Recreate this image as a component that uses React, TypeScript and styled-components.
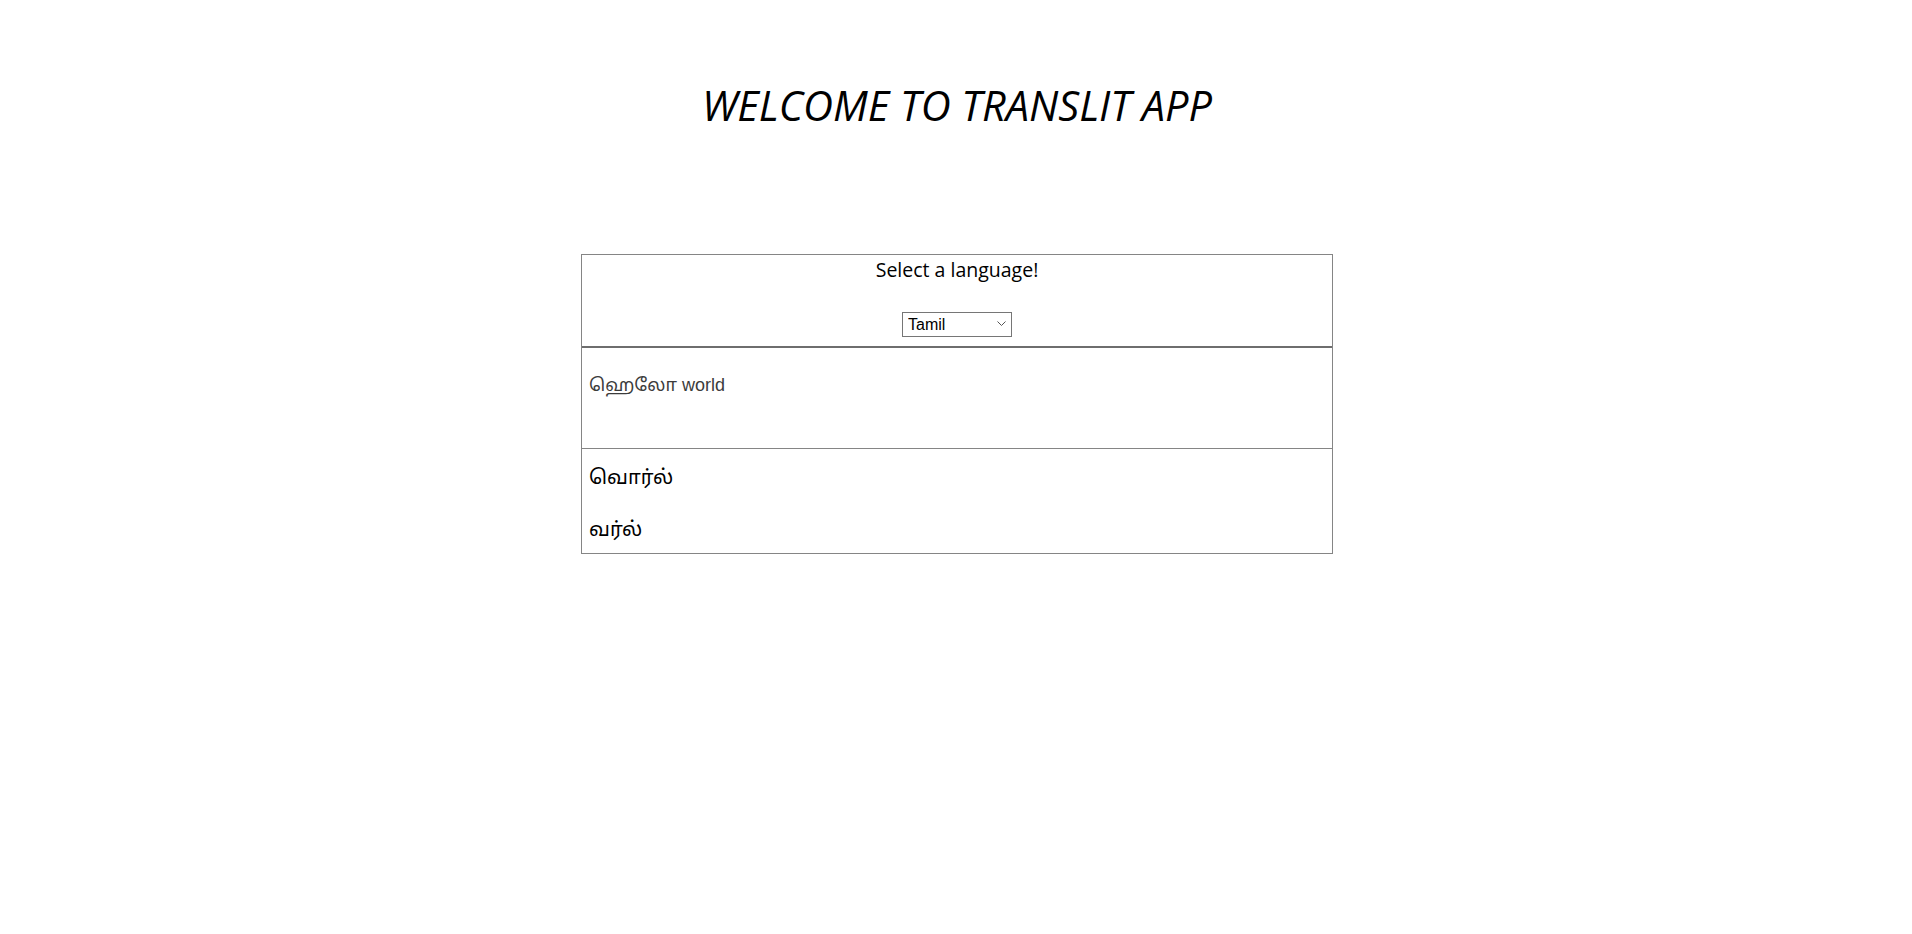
import React, { useEffect, useRef, useState } from "react";
import styled, { createGlobalStyle } from "styled-components";

const GlobalStyle = createGlobalStyle`
  html, body {
    margin: 0;
    padding: 0;
    background: #ffffff;
  }
  body {
    font-family: "Open Sans", "Noto Sans", sans-serif;
    color: #000;
  }
`;

const Page = styled.div`
  display: flex;
  flex-direction: column;
  align-items: center;
  padding: 77px 0 0 2px;
`;

const Title = styled.h1`
  margin: 0;
  font-family: "Open Sans", "Noto Sans", sans-serif;
  font-style: italic;
  font-weight: 400;
  font-size: 41.5px;
  line-height: normal;
`;

const Card = styled.div`
  margin-top: 121px;
  width: 750px;
  border: 1px solid #858585;
  display: flex;
  flex-direction: column;
`;

const Header = styled.div`
  display: flex;
  flex-direction: column;
  align-items: center;
  padding: 2px 0 9px;
  border-bottom: 2px solid #6e6e6e;
  gap: 29px;
`;

const Prompt = styled.div`
  font-size: 19.5px;
  line-height: 26px;
`;

const SelectWrap = styled.div`
  position: relative;
  width: 110px;
  height: 25px;
`;

const Select = styled.select`
  appearance: none;
  -webkit-appearance: none;
  width: 100%;
  height: 100%;
  box-sizing: border-box;
  border: 1px solid #767676;
  border-radius: 0;
  background: #fff;
  padding: 0 0 0 5px;
  font-family: "Liberation Sans", Arial, sans-serif;
  font-size: 16px;
  color: #000;
  outline: none;
`;

const Chevron = styled.svg`
  position: absolute;
  right: 6px;
  top: 9px;
  pointer-events: none;
`;

const Input = styled.textarea`
  display: block;
  box-sizing: border-box;
  width: 100%;
  height: 101px;
  margin: 0;
  padding: 27px 7px 0;
  border: none;
  border-bottom: 1px solid #858585;
  resize: none;
  outline: none;
  font-family: "Liberation Sans", Arial, "Noto Sans Tamil", sans-serif;
  font-size: 18px;
  color: #3c3c3c;
  caret-color: #000;
`;

const Suggestions = styled.ul`
  list-style: none;
  margin: 0;
  padding: 16px 7px 12px;
  display: flex;
  flex-direction: column;
  gap: 28px;
`;

const Suggestion = styled.li`
  font-family: "Liberation Serif", "Noto Sans Tamil", serif;
  font-size: 20px;
  line-height: 24px;
  cursor: pointer;
`;

const languages = ["Tamil", "Hindi", "Telugu", "Kannada", "Malayalam", "Bengali"];

function App(): JSX.Element {
  const [language, setLanguage] = useState("Tamil");
  const [text, setText] = useState("ஹெலோ world");
  const inputRef = useRef<HTMLTextAreaElement>(null);
  const suggestions = ["வொர்ல்", "வர்ல்"];

  // put the caret at the end of the typed text
  useEffect(() => {
    const el = inputRef.current;
    if (el) {
      el.focus();
      el.setSelectionRange(el.value.length, el.value.length);
    }
  }, []);

  return (
    <>
      <GlobalStyle />
      <Page>
        <Title>WELCOME TO TRANSLIT APP</Title>
        <Card>
          <Header>
            <Prompt>Select a language!</Prompt>
            <SelectWrap>
              <Select
                value={language}
                onChange={(e) => setLanguage(e.target.value)}
              >
                {languages.map((l) => (
                  <option key={l} value={l}>
                    {l}
                  </option>
                ))}
              </Select>
              <Chevron width="9" height="6" viewBox="0 0 9 6">
                <path d="M0.5 0.5 L4.5 4.5 L8.5 0.5" fill="none" stroke="#555" strokeWidth="1" />
              </Chevron>
            </SelectWrap>
          </Header>
          <Input
            ref={inputRef}
            value={text}
            onChange={(e) => setText(e.target.value)}
          />
          <Suggestions>
            {suggestions.map((s) => (
              <Suggestion key={s}>{s}</Suggestion>
            ))}
          </Suggestions>
        </Card>
      </Page>
    </>
  );
}

export default App;
